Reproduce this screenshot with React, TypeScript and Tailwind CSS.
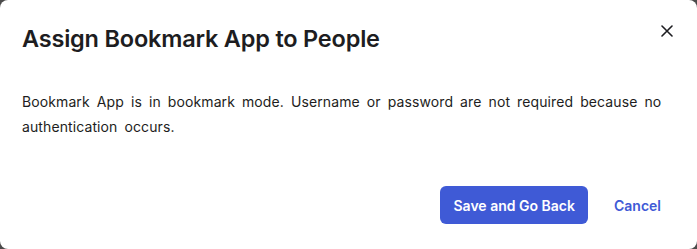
export default function App() {
  return (
    <div className="h-[249px] w-[697px] bg-[#4b4b4b]">
      <div
        className="flex h-full w-full flex-col rounded-lg bg-white"
        style={{ fontFamily: 'Inter, "Noto Sans", sans-serif' }}
      >
        <div className="flex items-start justify-between pl-[22px] pr-[24px] pt-[24px]">
          <h1 className="text-[23.5px] leading-[30px] font-semibold tracking-[-0.2px] text-[#1d1d21]">
            Assign Bookmark App to People
          </h1>
          <button type="button" className="mt-[1px] flex h-[12px] w-[12px] items-center justify-center text-[#1d1d21]">
            <svg width="12" height="12" viewBox="0 0 12 12" fill="none">
              <path d="M1 1L11 11M11 1L1 11" stroke="currentColor" strokeWidth="1.6" strokeLinecap="round" />
            </svg>
          </button>
        </div>
        <p className="mt-[35px] pl-[22px] pr-[24px] text-[14px] leading-[25px] tracking-[0.1px] text-[#1d1d21] [word-spacing:3px]">
          Bookmark App is in bookmark mode. Username or password are not required because no authentication occurs.
        </p>
        <div className="mt-auto mb-[25px] flex items-center justify-end gap-[26px] pr-[36px]">
          <button
            type="button"
            className="h-[38px] rounded-md bg-[#3f5ad6] px-[13px] text-[14px] font-semibold text-white"
          >
            Save and Go Back
          </button>
          <button type="button" className="text-[14px] font-semibold text-[#3f5ad6]">
            Cancel
          </button>
        </div>
      </div>
    </div>
  );
}
